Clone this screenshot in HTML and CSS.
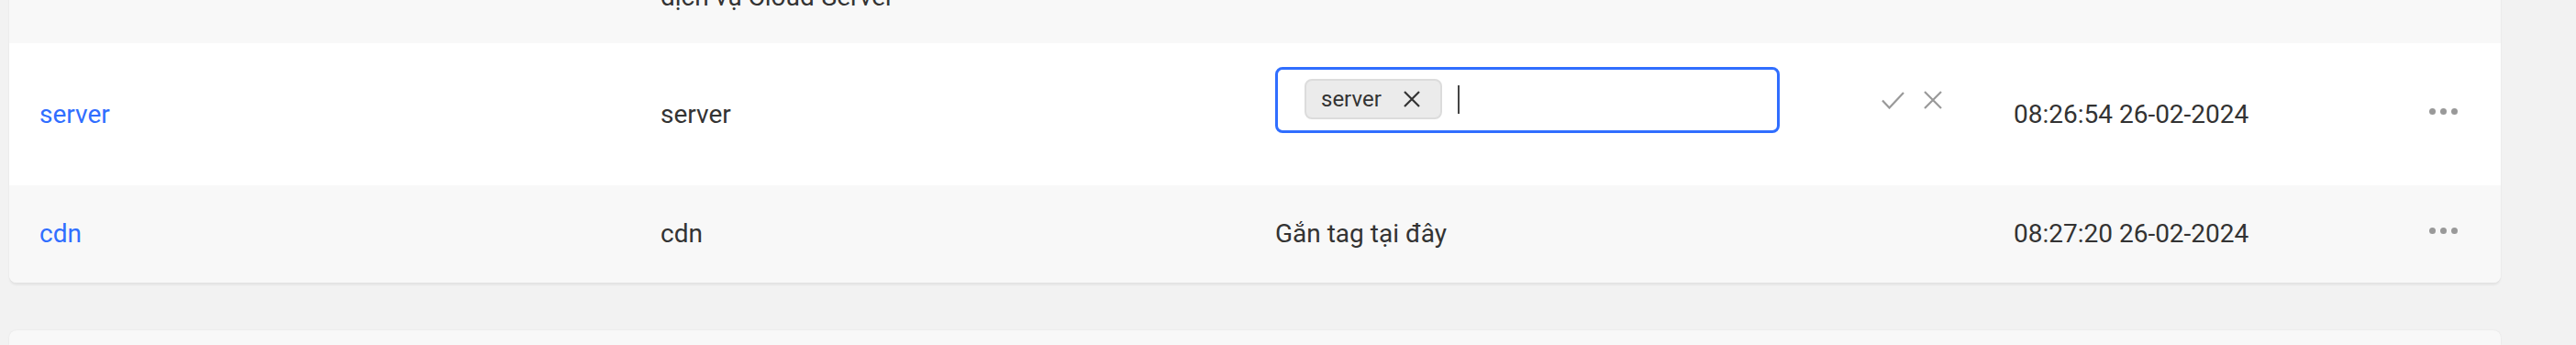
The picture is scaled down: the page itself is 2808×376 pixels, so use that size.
FILE: index.html
```html
<html>
<head>
    <title>Quản lý tag</title>
    <meta charset="UTF-8">
    <link rel="stylesheet" href="styles.css">
</head>
<body>
    <div class="page">
        <div class="tag-card">
            <!-- Hàng trên (chỉ thấy phần cuối) -->
            <div class="tag-row alt clipped">
                <div class="cell"></div>
                <div class="cell">dịch vụ Cloud-Server</div>
                <div class="cell"></div>
                <div class="cell"></div>
                <div class="cell"></div>
            </div>

            <!-- Hàng đang sửa tag -->
            <div class="tag-row">
                <div class="cell"><a class="tag-link" href="#">server</a></div>
                <div class="cell">server</div>
                <div class="cell cell-edit">
                    <div class="tag-input">
                        <span class="chip">
                            server
                            <svg class="chip-close" width="18" height="18" viewBox="0 0 18 18" fill="none" stroke="currentColor" stroke-width="2.2">
                                <path d="M1 1l16 16M17 1L1 17"/>
                            </svg>
                        </span>
                        <span class="caret"></span>
                    </div>
                    <div class="edit-actions">
                        <svg width="25" height="19" viewBox="0 0 25 19" fill="none" stroke="currentColor" stroke-width="2.2">
                            <path d="M1 9.5l7.5 8L24 1"/>
                        </svg>
                        <svg width="20" height="20" viewBox="0 0 20 20" fill="none" stroke="currentColor" stroke-width="2.2">
                            <path d="M1 1l18 18M19 1L1 19"/>
                        </svg>
                    </div>
                </div>
                <div class="cell">08:26:54 26-02-2024</div>
                <div class="cell"><span class="more"><i></i><i></i><i></i></span></div>
            </div>

            <div class="tag-row alt">
                <div class="cell"><a class="tag-link" href="#">cdn</a></div>
                <div class="cell">cdn</div>
                <div class="cell">Gắn tag tại đây</div>
                <div class="cell">08:27:20 26-02-2024</div>
                <div class="cell"><span class="more"><i></i><i></i><i></i></span></div>
            </div>
        </div>

        <div class="next-card"></div>
    </div>
</body>
</html>
```

FILE: styles.css
```css
:root {
    --primary: #306eff;
    --text: #333333;
    --muted: #999999;
    --stripe: #f8f8f8;
    --background: #f2f2f2;
}

body {
    margin: 0;
    background: var(--background);
    font-family: Roboto, 'Noto Sans', sans-serif;
    font-size: 28px;
    color: var(--text);
}

.page {
    padding: 0 82px 0 10px;
}

.tag-card {
    background: white;
    margin-top: -37px;
    border-radius: 0 0 8px 8px;
    box-shadow: 0 3px 2px rgba(0, 0, 0, 0.05), 0 0 2px rgba(0, 0, 0, 0.06);
    overflow: hidden;
}

.tag-row {
    display: grid;
    grid-template-columns: 677px 670px 805px 453px 1fr;
    align-items: center;
}

.tag-row.alt {
    background: var(--stripe);
}

.cell {
    padding: 32px 33px;
    line-height: 42px;
    white-space: nowrap;
}

/* Hàng trên cùng bị cắt bởi mép trang */
.tag-row.clipped .cell {
    padding: 13px 33px 29px;
}

.tag-link {
    color: var(--primary);
    text-decoration: none;
}

/* Ô nhập tag */
.cell-edit {
    display: flex;
    align-items: center;
    padding: 26px 33px 57px;
}

.tag-input {
    box-sizing: border-box;
    width: 550px;
    height: 72px;
    border: 3px solid var(--primary);
    border-radius: 8px;
    padding: 0 0 2px 29px;
    display: flex;
    align-items: center;
    background: white;
}

.chip {
    box-sizing: border-box;
    height: 44px;
    display: inline-flex;
    align-items: center;
    gap: 24px;
    padding: 0 22px 0 16px;
    background: #ebebeb;
    border: 2px solid #dcdcdc;
    border-radius: 8px;
    font-size: 24px;
    line-height: 40px;
}

.chip-close {
    color: var(--text);
}

.caret {
    width: 2px;
    height: 31px;
    margin-left: 17px;
    background: #444;
}

.edit-actions {
    display: flex;
    align-items: center;
    gap: 21px;
    margin-left: 111px;
    color: var(--muted);
}

.more {
    display: flex;
    gap: 5px;
    margin-bottom: 7px;
}

.more i {
    width: 7px;
    height: 7px;
    border-radius: 50%;
    background: var(--muted);
}

.next-card {
    margin-top: 52px;
    height: 16px;
    background: var(--stripe);
    border-radius: 8px 8px 0 0;
    box-shadow: 0 0 2px rgba(0, 0, 0, 0.08);
}
```
